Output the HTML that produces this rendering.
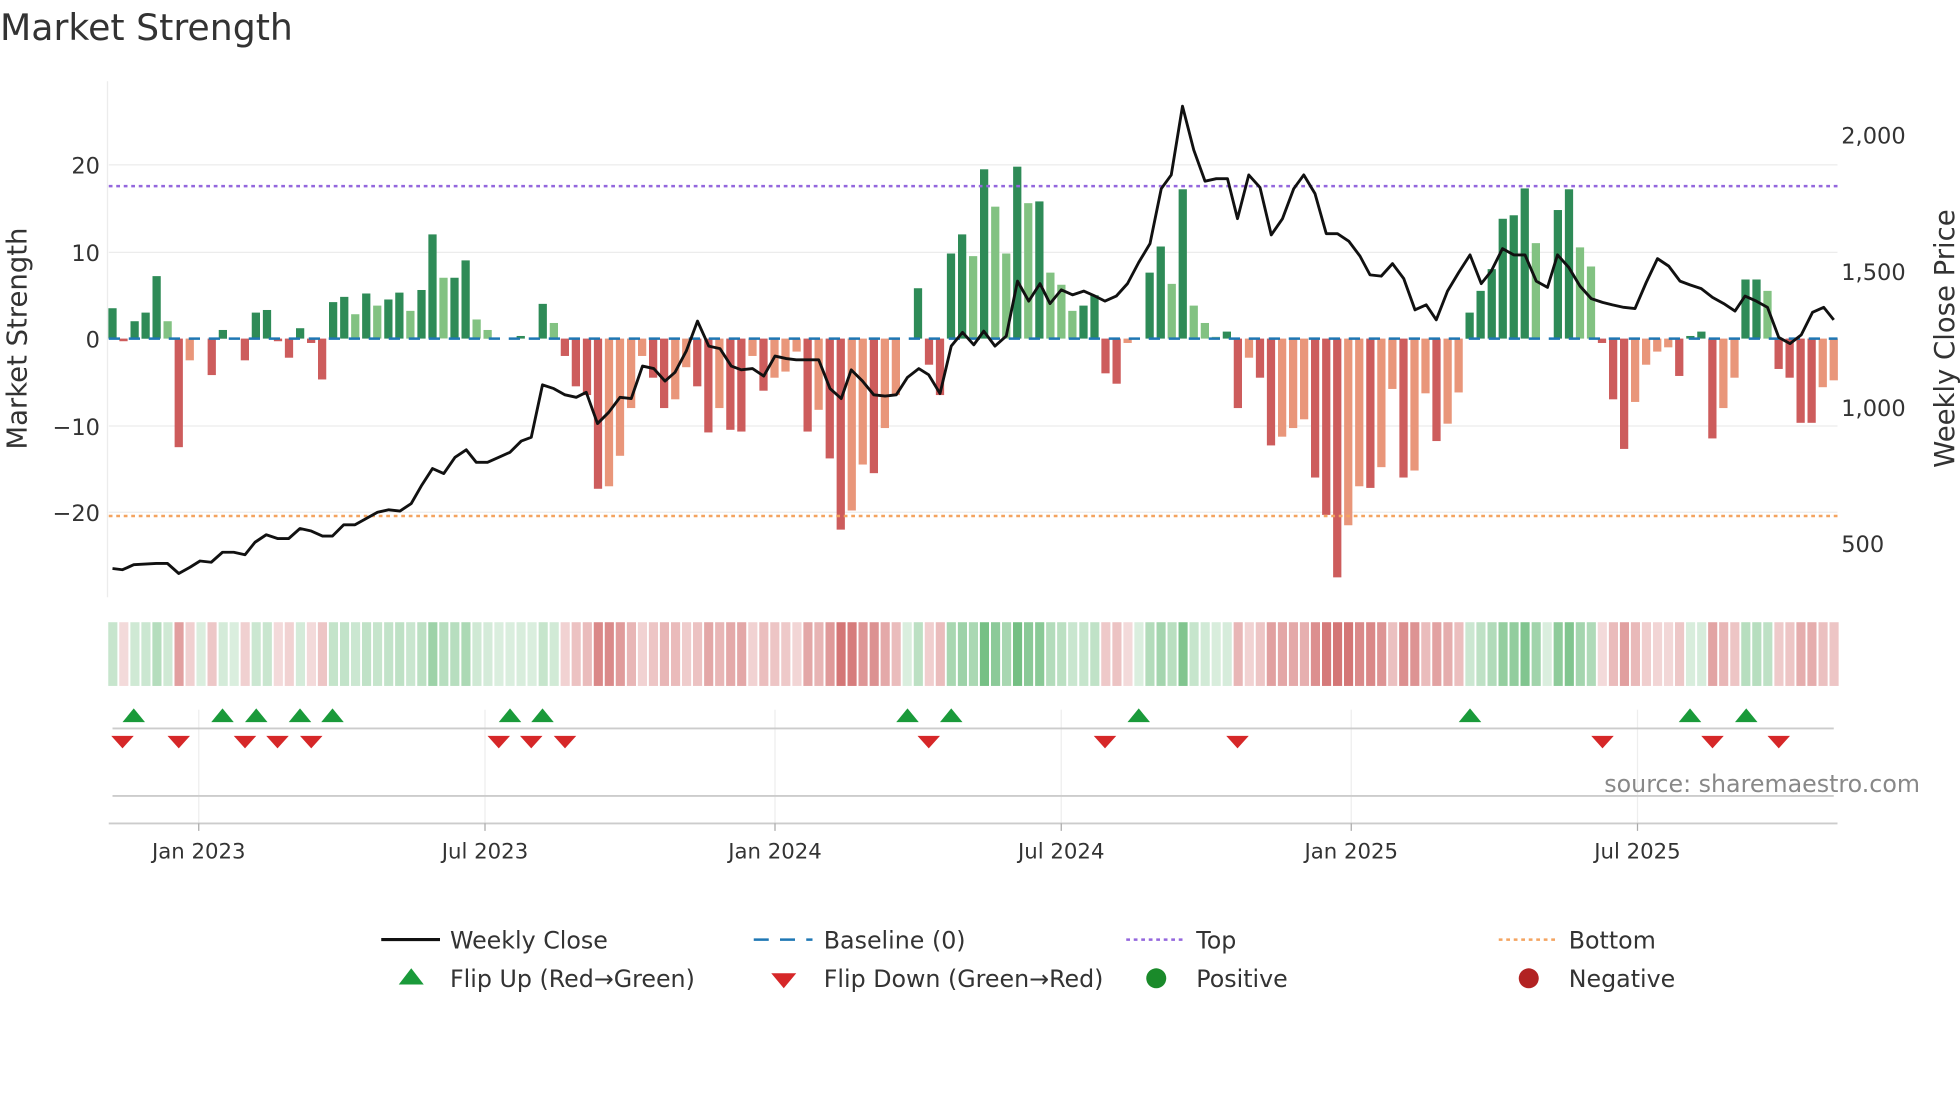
<!DOCTYPE html>
<html><head><meta charset="utf-8"><style>
html,body{margin:0;padding:0;background:#fff;width:1960px;height:1102px;overflow:hidden}
svg{display:block;font-family:"DejaVu Sans","Liberation Sans",sans-serif}
</style></head><body>
<svg id="s" width="1960" height="1102" viewBox="0 0 1568 882" preserveAspectRatio="none">
<rect width="1568" height="882" fill="#fff"/>
<text x="0" y="32" font-size="29" fill="#333">Market Strength</text>
<g stroke="#ececec" stroke-width="1">
<line x1="87" x2="1470" y1="132" y2="132"/><line x1="87" x2="1470" y1="202" y2="202"/>
<line x1="87" x2="1470" y1="341" y2="341"/><line x1="87" x2="1470" y1="410" y2="410"/>
<line x1="86" x2="86" y1="65" y2="478"/>
</g>
<g font-size="18" fill="#333" text-anchor="end">
<text x="80" y="139">20</text><text x="80" y="209">10</text><text x="80" y="278">0</text>
<text x="80" y="348">−10</text><text x="80" y="417">−20</text>
</g>
<g font-size="18" fill="#333">
<text x="1473" y="115">2,000</text><text x="1473" y="224">1,500</text><text x="1473" y="333">1,000</text><text x="1473" y="442">500</text>
</g>
<text transform="translate(21,271) rotate(-90)" font-size="22" fill="#333" text-anchor="middle">Market Strength</text>
<text transform="translate(1563,271) rotate(-90)" font-size="22" fill="#333" text-anchor="middle">Weekly Close Price</text>
<g id="bars"></g>
<line x1="87" x2="1470" y1="271" y2="271" stroke="#1f77b4" stroke-width="2" stroke-dasharray="9,7"/>
<line x1="87" x2="1470" y1="149" y2="149" stroke="#9467dd" stroke-width="2" stroke-dasharray="3,3"/>
<line x1="87" x2="1470" y1="413" y2="413" stroke="#f4a460" stroke-width="2" stroke-dasharray="3,3"/>
<polyline id="price" fill="none" stroke="#111" stroke-width="2.3" stroke-linejoin="round"/>
<g id="heat"></g>
<g stroke="#eee"><line x1="159" x2="159" y1="568" y2="659"/><line x1="388" x2="388" y1="568" y2="659"/><line x1="620" x2="620" y1="568" y2="659"/><line x1="849" x2="849" y1="568" y2="659"/><line x1="1081" x2="1081" y1="568" y2="659"/><line x1="1310" x2="1310" y1="568" y2="659"/></g>
<line x1="90" x2="1467" y1="583" y2="583" stroke="#ccc" stroke-width="1.5"/>
<line x1="90" x2="1467" y1="637" y2="637" stroke="#ccc" stroke-width="1.5"/>
<line x1="87" x2="1470" y1="659" y2="659" stroke="#ccc" stroke-width="1.5"/>
<g stroke="#aaa"><line x1="159" x2="159" y1="659" y2="665"/><line x1="388" x2="388" y1="659" y2="665"/><line x1="620" x2="620" y1="659" y2="665"/><line x1="849" x2="849" y1="659" y2="665"/><line x1="1081" x2="1081" y1="659" y2="665"/><line x1="1310" x2="1310" y1="659" y2="665"/></g>
<g id="flips"></g>
<text x="1536" y="634" font-size="19" fill="#888" text-anchor="end">source: sharemaestro.com</text>
<g font-size="17" fill="#333" text-anchor="middle">
<text x="159" y="687">Jan 2023</text><text x="388" y="687">Jul 2023</text><text x="620" y="687">Jan 2024</text>
<text x="849" y="687">Jul 2024</text><text x="1081" y="687">Jan 2025</text><text x="1310" y="687">Jul 2025</text>
</g>
<g font-size="19" fill="#333">
<line x1="305" x2="352" y1="752" y2="752" stroke="#111" stroke-width="2.5"/><text x="360" y="759">Weekly Close</text>
<line x1="603" x2="650" y1="752" y2="752" stroke="#1f77b4" stroke-width="2" stroke-dasharray="12,9"/><text x="659" y="759">Baseline (0)</text>
<line x1="901" x2="948" y1="752" y2="752" stroke="#9467dd" stroke-width="2" stroke-dasharray="3,3"/><text x="957" y="759">Top</text>
<line x1="1199" x2="1246" y1="752" y2="752" stroke="#f4a460" stroke-width="2" stroke-dasharray="3,3"/><text x="1255" y="759">Bottom</text>
<polygon points="319,788 339,788 329,775" fill="#1a9a3a"/><text x="360" y="790">Flip Up (Red→Green)</text>
<polygon points="617,779 637,779 627,791" fill="#d62728"/><text x="659" y="790">Flip Down (Green→Red)</text>
<circle cx="925" cy="783" r="8" fill="#1a8a2a"/><text x="957" y="790">Positive</text>
<circle cx="1223" cy="783" r="8" fill="#b22222"/><text x="1255" y="790">Negative</text>
</g>
</svg>
<script>
var v=[3.5,-0.3,2,3,7.2,2,-12.5,-2.5,0,-4.2,1,0,-2.5,3,3.3,-0.3,-2.2,1.2,-0.5,-4.7,4.2,4.8,2.8,5.2,3.8,4.5,5.3,3.2,5.6,12,7,7,9,2.2,1,0,0,0.3,0,4,1.8,-2,-5.5,-6.5,-17.3,-17,-13.5,-8,-2,-4.5,-8,-7,-3.3,-5.5,-10.8,-8,-10.5,-10.7,-2,-6,-4.5,-3.8,-1.5,-10.7,-8.2,-13.8,-22,-19.8,-14.5,-15.5,-10.3,-6.5,0,5.8,-3,-6.5,9.8,12,9.5,19.5,15.2,9.8,19.8,15.6,15.8,7.6,6.2,3.2,3.8,5,-4,-5.2,-0.5,0,7.6,10.6,6.3,17.2,3.8,1.8,0.2,0.8,-8,-2.2,-4.5,-12.3,-11.3,-10.3,-9.3,-16,-20.3,-27.5,-21.5,-17,-17.2,-14.8,-5.8,-16,-15.2,-6.3,-11.8,-9.8,-6.2,3,5.5,8,13.8,14.2,17.3,11,0,14.8,17.2,10.5,8.3,-0.5,-7,-12.7,-7.3,-3,-1.5,-1,-4.3,0.3,0.8,-11.5,-8,-4.5,6.8,6.8,5.5,-3.5,-4.5,-9.7,-9.7,-5.6,-4.8];
var n=v.length,step=(1467-90)/(n-1),b="",h="";
for(var i=0;i<n;i++){var x=90+i*step,val=v[i],p=i?v[i-1]:0,y=271-val*6.95,c;
if(val>=0)c=(val>=p)?"#2e8b57":"#82c282";else c=(val<=p)?"#cd5c5c":"#e9967a";
if(val!=0)b+='<rect x="'+(x-3.3).toFixed(1)+'" y="'+Math.min(y,271).toFixed(1)+'" width="6.6" height="'+Math.abs(val*6.95).toFixed(1)+'" fill="'+c+'"/>';
var a=Math.min(0.78,0.2+Math.abs(val)/36);var hc=val>=0?"rgba(70,170,90,"+a.toFixed(2)+")":"rgba(200,80,80,"+a.toFixed(2)+")";
h+='<rect x="'+(x-4.4+1).toFixed(1)+'" y="498" width="'+(step-1.5).toFixed(1)+'" height="51" fill="'+hc+'"/>';}
document.getElementById("bars").innerHTML=b;document.getElementById("heat").innerHTML=h;
var P=[[90,455],[98,456],[107,452],[125,451],[134,451],[143,459],[152,454],[160,449],[169,450],[178,442],[187,442],[196,444],[204,434],[213,428],[222,431],[231,431],[240,423],[249,425],[258,429],[266,429],[275,420],[284,420],[293,415],[302,410],[311,408],[320,409],[329,403],[337,389],[346,375],[355,379],[364,366],[373,360],[381,370],[390,370],[399,366],[408,362],[417,353],[425,350],[434,308],[443,311],[452,316],[461,318],[469,314],[478,339],[487,330],[496,318],[505,319],[514,293],[523,295],[532,305],[540,298],[549,281],[558,257],[567,277],[576,279],[585,293],[593,296],[602,295],[611,301],[620,285],[629,287],[637,288],[646,288],[655,288],[664,311],[673,319],[681,296],[690,305],[699,316],[708,317],[717,316],[726,302],[735,295],[743,300],[752,315],[761,277],[770,266],[779,276],[787,265],[796,277],[805,269],[814,225],[823,241],[832,227],[840,243],[849,232],[858,236],[867,233],[876,237],[884,241],[893,237],[902,227],[911,210],[920,195],[929,151],[937,140],[946,85],[955,120],[964,145],[973,143],[982,143],[990,175],[999,140],[1008,150],[1017,188],[1026,175],[1035,151],[1043,140],[1052,155],[1061,187],[1070,187],[1079,193],[1088,205],[1096,220],[1105,221],[1114,211],[1123,223],[1132,248],[1141,244],[1149,256],[1158,233],[1167,218],[1176,204],[1185,227],[1193,217],[1202,199],[1211,204],[1220,204],[1229,225],[1238,230],[1246,204],[1255,214],[1264,229],[1273,239],[1282,242],[1290,244],[1299,246],[1308,247],[1317,226],[1326,207],[1335,213],[1344,225],[1352,228],[1361,231],[1370,238],[1379,243],[1388,249],[1396,237],[1405,241],[1414,246],[1423,270],[1432,275],[1441,268],[1450,250],[1459,246],[1467,256]];
document.getElementById("price").setAttribute("points",P.map(function(q){return q.join(",")}).join(" "));
var up=[107,178,205,240,266,408,434,726,761,911,1176,1352,1397],dn=[98,143,196,222,249,399,425,452,743,884,990,1282,1370,1423],f="";
up.forEach(function(x){f+='<polygon points="'+(x-9)+',578 '+(x+9)+',578 '+x+',567" fill="#1a9a3a"/>'});
dn.forEach(function(x){f+='<polygon points="'+(x-9)+',589 '+(x+9)+',589 '+x+',599" fill="#d62728"/>'});
document.getElementById("flips").innerHTML=f;
</script>
</body></html>
